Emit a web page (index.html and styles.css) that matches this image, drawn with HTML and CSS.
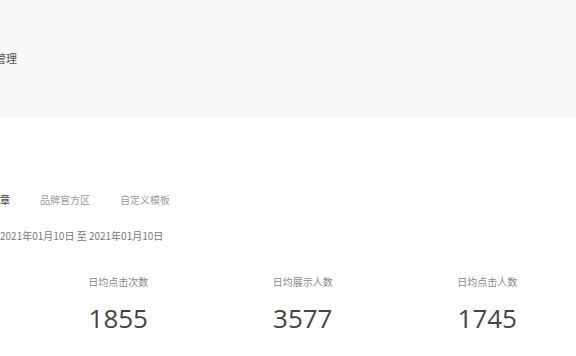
FILE: index.html
```html
<!DOCTYPE html>
<html lang="zh-CN">
<head>
    <meta charset="UTF-8">
    <meta name="viewport" content="width=device-width, initial-scale=1.0">
    <title>数据统计</title>
    <link rel="stylesheet" href="styles.css">
</head>
<body>
    <header class="top-bar">
        <h1 class="page-title">文章管理</h1>
    </header>
    <div class="sub-bar"></div>
    <main class="content">
        <nav class="tabs">
            <span class="tab active">文章</span>
            <span class="tab">品牌官方区</span>
            <span class="tab">自定义模板</span>
        </nav>
        <div class="date-range">2021年01月10日 至 2021年01月10日</div>
        <div class="stats">
            <div class="stat">
                <div class="stat-label">日均点击次数</div>
                <div class="stat-value">1855</div>
            </div>
            <div class="stat">
                <div class="stat-label">日均展示人数</div>
                <div class="stat-value">3577</div>
            </div>
            <div class="stat">
                <div class="stat-label">日均点击人数</div>
                <div class="stat-value">1745</div>
            </div>
        </div>
    </main>
</body>
</html>
```

FILE: styles.css
```css
body {
    margin: 0;
    padding: 0;
    font-family: "Noto Sans CJK SC", "Noto Sans", sans-serif;
    color: #333;
    background-color: #fff;
    overflow: hidden;
}
.top-bar {
    height: 74px;
    background-color: #f8f8f8;
    border-bottom: 1px solid #eeeff1;
    display: flex;
    align-items: flex-end;
}
.page-title {
    margin: 0 0 8px -27px;
    font-size: 11px;
    font-weight: normal;
    line-height: 16px;
    color: #555;
}
.sub-bar {
    height: 42px;
    background-color: #f7f8fa;
}
.content {
    padding-top: 76px;
}
.tabs {
    display: flex;
    gap: 30px;
    margin-left: -10px;
    font-size: 10px;
    line-height: 14px;
}
.tab {
    color: #9a9a9a;
}
.tab.active {
    color: #444;
    font-weight: 500;
}
.date-range {
    margin-top: 22px;
    font-size: 10px;
    line-height: 14px;
    color: #777;
}
.stats {
    display: grid;
    grid-template-columns: repeat(3, 184.5px);
    padding-left: 26px;
    margin-top: 32px;
    text-align: center;
}
.stat-label {
    font-size: 10px;
    line-height: 14px;
    color: #888;
}
.stat-value {
    margin-top: 13px;
    font-family: "Open Sans", sans-serif;
    font-size: 26px;
    line-height: 32px;
    color: #444;
}
```
